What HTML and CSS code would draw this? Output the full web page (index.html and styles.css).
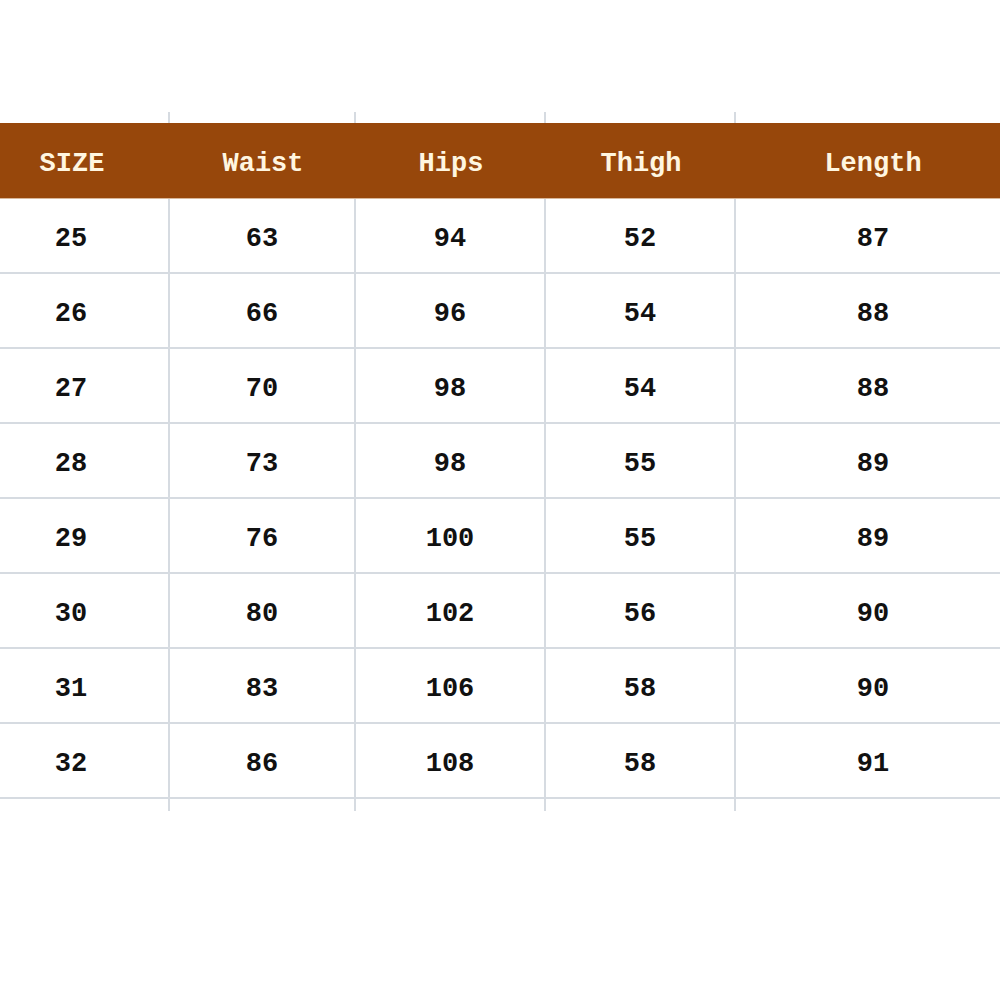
FILE: index.html
```html
<!DOCTYPE html>
<html>
<head>
<meta charset="utf-8">
<link rel="stylesheet" href="styles.css">
</head>
<body>
<div class="sheet">
  <div class="row spacer"><div class="c"></div><div class="c"></div><div class="c"></div><div class="c"></div><div class="c"></div></div>
  <div class="row head"><div class="c">SIZE</div><div class="c">Waist</div><div class="c">Hips</div><div class="c">Thigh</div><div class="c">Length</div></div>
  <div class="row"><div class="c">25</div><div class="c">63</div><div class="c">94</div><div class="c">52</div><div class="c">87</div></div>
  <div class="row"><div class="c">26</div><div class="c">66</div><div class="c">96</div><div class="c">54</div><div class="c">88</div></div>
  <div class="row"><div class="c">27</div><div class="c">70</div><div class="c">98</div><div class="c">54</div><div class="c">88</div></div>
  <div class="row"><div class="c">28</div><div class="c">73</div><div class="c">98</div><div class="c">55</div><div class="c">89</div></div>
  <div class="row"><div class="c">29</div><div class="c">76</div><div class="c">100</div><div class="c">55</div><div class="c">89</div></div>
  <div class="row"><div class="c">30</div><div class="c">80</div><div class="c">102</div><div class="c">56</div><div class="c">90</div></div>
  <div class="row"><div class="c">31</div><div class="c">83</div><div class="c">106</div><div class="c">58</div><div class="c">90</div></div>
  <div class="row"><div class="c">32</div><div class="c">86</div><div class="c">108</div><div class="c">58</div><div class="c">91</div></div>
  <div class="row spacer tail"><div class="c"></div><div class="c"></div><div class="c"></div><div class="c"></div><div class="c"></div></div>
</div>
</body>
</html>
```
FILE: styles.css
```css
html, body {
  margin: 0;
  padding: 0;
  background: #ffffff;
  overflow: hidden;
}
.sheet {
  margin-top: 112px;
  margin-left: -26px;
  width: 1040px;
  font-family: "Liberation Mono", "DejaVu Sans Mono", monospace;
  font-weight: bold;
  font-size: 27px;
  color: #111111;
}
.row {
  display: grid;
  grid-template-columns: 196px 186px 190px 190px 274px;
  height: 75px;
  border-bottom: 2px solid #d6dbe1;
  box-sizing: border-box;
}
.c {
  display: flex;
  align-items: center;
  justify-content: center;
  padding-top: 6px;
  border-right: 2px solid #d6dbe1;
}
.c:last-child {
  border-right: none;
}
.spacer {
  height: 11px;
  border-bottom: none;
}
.spacer .c {
  padding-top: 0;
}
.tail {
  height: 12px;
}
.head {
  height: 76px;
  background: #97470b;
  color: #fff6e0;
  border-bottom: 1px solid #d9b79a;
}
.head .c {
  border-right: none;
}
```
